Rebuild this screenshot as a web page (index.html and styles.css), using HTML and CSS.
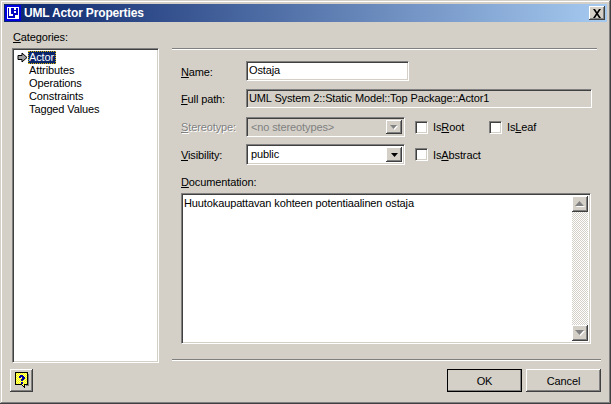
FILE: index.html
```html
<!DOCTYPE html>
<html>
<head>
<meta charset="utf-8">
<title>UML Actor Properties</title>
<link rel="stylesheet" href="styles.css">
</head>
<body>
<div class="window">
  <div class="titlebar">
    <svg class="appicon" width="16" height="16" viewBox="0 0 16 16">
      <rect width="16" height="16" fill="#0000e0"/>
      <rect x="2" y="2" width="12" height="12" fill="#fff"/>
      <rect x="3" y="3" width="10" height="10" fill="#0000c0"/>
      <path d="M4 3h2v8h-2zM6 9h2v2h-2zM9 3h2v2h-2zM9 6h2v2h-2zM10 10h3v3h-3z" fill="#fff"/>
    </svg>
    <span class="title">UML Actor Properties</span>
    <button class="btn closebtn"><svg width="10" height="9" viewBox="0 0 10 9"><path d="M1 0h2l2 3 2-3h2L6 4.500 9 9H7L5 6 3 9H1l3-4.500z" fill="#000"/></svg></button>
  </div>
  <div class="content">
    <div class="catcol">
      <div class="catlabel"><u>C</u>ategories:</div>
      <div class="listbox sunken">
        <div class="item first">
          <svg class="arrow" width="11" height="11" viewBox="0 0 11 11"><path d="M1 3.500h4V1l5 4.500L5 10V7.500H1z" fill="#a0a0a0" stroke="#000"/></svg>
          <span class="selected">Actor</span>
        </div>
        <div class="item">Attributes</div>
        <div class="item">Operations</div>
        <div class="item">Constraints</div>
        <div class="item">Tagged Values</div>
      </div>
    </div>
    <div class="panel">
      <div class="row namerow">
        <label class="lbl"><u>N</u>ame:</label>
        <div class="field sunken namefield">Ostaja</div>
      </div>
      <div class="row pathrow">
        <label class="lbl"><u>F</u>ull path:</label>
        <div class="field sunken pathfield">UML System 2::Static Model::Top Package::Actor1</div>
      </div>
      <div class="row stereorow">
        <label class="lbl disabled"><u>S</u>tereotype:</label>
        <div class="combo sunken combodisabled">
          <span class="comboval">&lt;no stereotypes&gt;</span>
          <span class="btn dropbtn"><svg width="8" height="5" viewBox="0 0 8 5"><path d="M1 1h7L4.500 5z" fill="#fff"/><path d="M0 0h7L3.500 4z" fill="#808080"/></svg></span>
        </div>
        <span class="check"></span><span class="chklabel rootlabel">Is<u>R</u>oot</span>
        <span class="check"></span><span class="chklabel">Is<u>L</u>eaf</span>
      </div>
      <div class="row visrow">
        <label class="lbl"><u>V</u>isibility:</label>
        <div class="combo sunken visfield">
          <span class="comboval">public</span>
          <span class="btn dropbtn"><svg width="7" height="4" viewBox="0 0 7 4"><path d="M0 0h7L3.500 4z" fill="#000"/></svg></span>
        </div>
        <span class="check"></span><span class="chklabel">Is<u>A</u>bstract</span>
      </div>
      <div class="doclabel"><u>D</u>ocumentation:</div>
      <div class="docbox sunken">
        <div class="doctext">Huutokaupattavan kohteen potentiaalinen ostaja</div>
        <div class="scrollbar">
          <span class="btn sbbtn"><svg width="10" height="6" viewBox="0 0 10 6"><path d="M5.500 1L10 6H1z" fill="#fff"/><path d="M4.500 0L9 5H0z" fill="#808080"/></svg></span>
          <svg class="sbtrack">
            <defs>
              <pattern id="checker" width="2" height="2" patternUnits="userSpaceOnUse">
                <rect width="2" height="2" fill="#fff"/>
                <rect width="1" height="1" fill="#d4d0c8"/>
                <rect x="1" y="1" width="1" height="1" fill="#d4d0c8"/>
              </pattern>
            </defs>
            <rect width="100%" height="100%" fill="url(#checker)" shape-rendering="crispEdges"/>
          </svg>
          <span class="btn sbbtn"><svg width="10" height="6" viewBox="0 0 10 6"><path d="M1 1h9L5.500 6z" fill="#fff"/><path d="M0 0h9L4.500 5z" fill="#808080"/></svg></span>
        </div>
      </div>
    </div>
  </div>
  <div class="sepwrap"><div class="sep"></div></div>
  <div class="footer">
    <button class="btn helpbtn">
      <svg width="14" height="17" viewBox="0 0 14 17" shape-rendering="crispEdges">
        <defs>
          <pattern id="dots" width="2" height="2" patternUnits="userSpaceOnUse">
            <rect width="2" height="2" fill="#ffff80"/>
            <rect width="1" height="1" fill="#ffff00"/>
            <rect x="1" y="1" width="1" height="1" fill="#ffff00"/>
          </pattern>
        </defs>
        <path d="M0.500 0.500h12v12h-3v3l-3-3h-6z" fill="url(#dots)" stroke="#000"/>
        <path d="M13 2h1v12h-3v-1h2z" fill="#808080"/>
        <path d="M5 3h3v1h1v1h1v2H9v1H8v1H6V7h1V5H6v1H4V4h1zM6 10h2v2H6z" fill="#0000a0"/>
      </svg>
    </button>
    <div class="actions">
      <button class="btn okbtn">OK</button>
      <button class="btn cancelbtn">Cancel</button>
    </div>
  </div>
</div>
</body>
</html>
```
FILE: styles.css
```css
* { box-sizing: border-box; }
html, body { margin: 0; padding: 0; }
body {
  width: 611px;
  height: 404px;
  overflow: hidden;
  font-family: "Liberation Sans", Arial, sans-serif;
  font-size: 11px;
  letter-spacing: -0.12px;
  color: #000;
  background: #d4d0c8;
}
.window {
  width: 611px;
  height: 404px;
  padding: 4px;
  display: flex;
  flex-direction: column;
  background: #d4d0c8;
  box-shadow: inset -1px -1px #404040, inset 1px 1px #d4d0c8, inset -2px -2px #808080, inset 2px 2px #fff;
}
.titlebar {
  height: 18px;
  flex: none;
  display: flex;
  align-items: center;
  padding: 0 2px 0 1px;
  background: linear-gradient(to right, #0a246a, #a6caf0);
}
.appicon { flex: none; display: block; }
.title {
  margin-left: 3px;
  flex: 1;
  color: #fff;
  font-weight: bold;
  font-size: 12px;
  letter-spacing: -0.15px;
  white-space: nowrap;
}
.btn {
  display: flex;
  align-items: center;
  justify-content: center;
  padding: 0;
  border: 0;
  margin: 0;
  background: #d4d0c8;
  font: inherit;
  letter-spacing: inherit;
  color: #000;
  box-shadow: inset -1px -1px #404040, inset 1px 1px #fff, inset -2px -2px #808080, inset 2px 2px #d4d0c8;
}
.closebtn { width: 16px; height: 14px; flex: none; }
.sunken {
  border: 1px solid;
  border-color: #808080 #fff #fff #808080;
  box-shadow: inset 1px 1px #404040, inset -1px -1px #d4d0c8;
}
.content {
  display: flex;
  height: 337px;
  flex: none;
  padding-left: 8px;
}
.catcol { width: 147px; flex: none; }
.catlabel { height: 26px; padding-top: 9px; line-height: 13px; padding-left: 1px; }
.listbox {
  height: 315px;
  background: #fff;
  padding: 2px 2px 2px 4px;
}
.item { height: 13px; line-height: 13px; padding-left: 12px; white-space: nowrap; }
.item.first { position: relative; }
.arrow { position: absolute; left: 0; top: 1px; }
.selected {
  display: inline-block;
  background: #0a246a;
  color: #fff;
  outline: 1px dotted #d4b000;
  outline-offset: -1px;
  padding: 0 2px 0 1px;
  margin-left: -1px;
  height: 13px;
}
.panel {
  width: 425px;
  flex: none;
  margin: 26px 0 0 13px;
  padding: 12px 0 0 9px;
  border-top: 1px solid #808080;
  box-shadow: inset 0 1px #fff;
  align-self: flex-start;
}
.row { display: flex; align-items: center; }
.namerow { height: 20px; }
.namerow .lbl { padding-top: 2px; }
.pathrow { height: 19px; margin-top: 8px; }
.stereorow { height: 20px; margin-top: 9px; }
.visrow { height: 21px; margin-top: 7px; }
.lbl { width: 65px; flex: none; }
.disabled { color: #808080; text-shadow: 1px 1px #fff; }
.field { height: 100%; line-height: 15px; padding: 1px 2px; white-space: nowrap; }
.namefield { width: 163px; background: #fff; }
.pathfield { width: 346px; background: #d4d0c8; }
.combo { width: 159px; height: 100%; display: flex; padding: 2px; align-items: stretch; }
.comboval { flex: 1; padding: 1px 0 0 2px; line-height: 13px; }
.combodisabled { background: #d4d0c8; color: #808080; }
.visfield { background: #fff; }
.dropbtn { width: 16px; flex: none; }
.check {
  width: 13px;
  height: 13px;
  flex: none;
  margin-left: 10px;
  background: #fff;
  border: 1px solid;
  border-color: #808080 #fff #fff #808080;
  box-shadow: inset 1px 1px #404040, inset -1px -1px #d4d0c8;
}
.chklabel { margin-left: 5px; }
.rootlabel + .check { margin-left: 0; }
.rootlabel { width: 56px; flex: none; }
.doclabel { height: 13px; line-height: 13px; margin-top: 11px; margin-bottom: 4px; }
.docbox {
  width: 410px;
  height: 151px;
  background: #fff;
  display: flex;
  padding: 2px;
}
.doctext { flex: 1; padding: 1px 0; line-height: 13px; }
.scrollbar { width: 16px; flex: none; display: flex; flex-direction: column; }
.sbbtn { height: 16px; flex: none; }
.sbtrack { flex: 1; width: 16px; min-height: 0; display: block; }
.sepwrap { padding: 0 6px 0 168px; height: 2px; flex: none; }
.sep { height: 2px; border-top: 1px solid #808080; border-bottom: 1px solid #fff; }
.footer {
  display: flex;
  justify-content: space-between;
  padding: 8px 6px 0 6px;
}
.helpbtn { width: 23px; height: 23px; }
.actions { display: flex; gap: 4px; }
.okbtn, .cancelbtn { width: 75px; height: 23px; }
.okbtn { outline: 1px solid #000; outline-offset: -1px; }
```
